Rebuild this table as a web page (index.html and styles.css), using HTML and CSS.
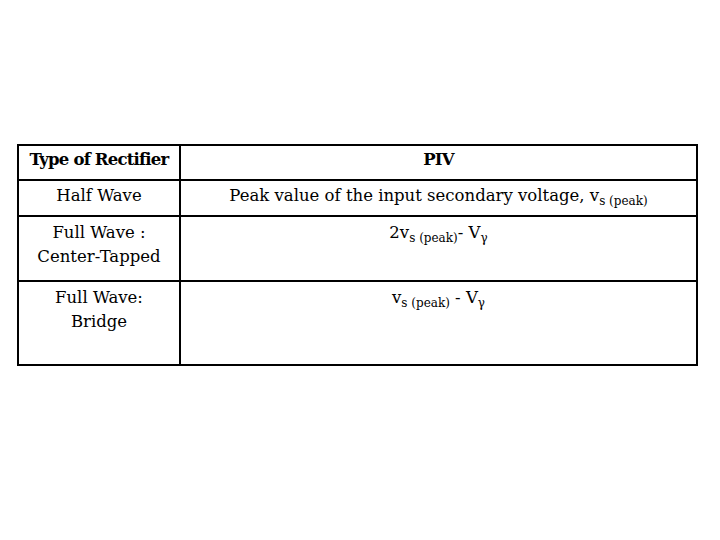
FILE: index.html
```html
<!DOCTYPE html>
<html>
<head>
<meta charset="utf-8">
<link rel="stylesheet" href="styles.css">
</head>
<body>
<div class="page">
  <div class="grid">
    <div class="cell head">Type of Rectifier</div>
    <div class="cell head">PIV</div>
    <div class="cell r1">Half Wave</div>
    <div class="cell r1">Peak value of the input secondary voltage, v<sub>s (peak)</sub></div>
    <div class="cell r2">Full Wave :<br>Center-Tapped</div>
    <div class="cell r2">2v<sub>s (peak)</sub>- V<sub>γ</sub></div>
    <div class="cell r3">Full Wave:<br>Bridge</div>
    <div class="cell r3">v<sub>s (peak)</sub> - V<sub>γ</sub></div>
  </div>
</div>
</body>
</html>
```
FILE: styles.css
```css
html, body {
  margin: 0;
  padding: 0;
  background: #fff;
}
.page {
  padding: 144px 0 0 17px;
}
.grid {
  display: grid;
  grid-template-columns: 160px 515px;
  grid-template-rows: 33px 34px 63px 82px;
  gap: 2px;
  padding: 2px;
  background: #000;
  width: 677px;
  font-family: "DejaVu Serif", "Liberation Serif", serif;
  font-size: 16.5px;
  line-height: 24px;
  color: #000;
}
.cell {
  background: #fff;
  text-align: center;
  padding-top: 3px;
}
.head {
  font-weight: bold;
  padding-top: 2px;
  letter-spacing: -0.8px;
}
.r2, .r3 {
  padding-top: 4px;
}
sub {
  font-size: 12px;
  line-height: 0;
  vertical-align: -4px;
}
```
